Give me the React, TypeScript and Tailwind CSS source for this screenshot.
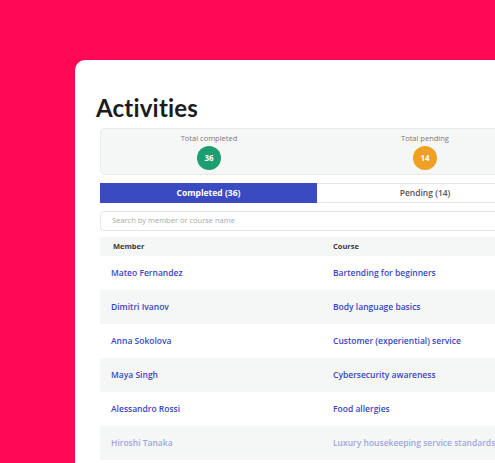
import React from "react";

const rows = [
  ["Mateo Fernandez", "Bartending for beginners"],
  ["Dimitri Ivanov", "Body language basics"],
  ["Anna Sokolova", "Customer (experiential) service"],
  ["Maya Singh", "Cybersecurity awareness"],
  ["Alessandro Rossi", "Food allergies"],
  ["Hiroshi Tanaka", "Luxury housekeeping service standards"],
];

export default function App() {
  return (
    <div
      className="w-[495px] h-[463px] overflow-hidden bg-[#ff0855] flex pl-[75px] pt-[60px]"
      style={{ fontFamily: "'Open Sans', Lato, sans-serif" }}
    >
      <div className="w-[484px] shrink-0 bg-white rounded-tl-[10px] pl-[25px] pt-[34px] flex flex-col">
        <h1
          className="text-[24px] leading-[28px] font-bold text-[#1b1b1b] -ml-[4px] tracking-[0.2px]"
          style={{ fontFamily: "Lato, sans-serif" }}
        >
          Activities
        </h1>
        <div className="w-[434px] flex flex-col">
          <div className="mt-[6px] h-[47px] rounded-[5px] border border-[#e9ebeb] bg-[#f5f6f6] grid grid-cols-2">
            <div className="flex flex-col items-center pt-[4px]">
              <span className="text-[7.5px] leading-[10px] text-[#7a7a7a]">Total completed</span>
              <span className="mt-[3px] w-[24px] h-[24px] rounded-full bg-[#1c9e70] text-white text-[8px] font-bold flex items-center justify-center">
                36
              </span>
            </div>
            <div className="flex flex-col items-center pt-[4px]">
              <span className="text-[7.5px] leading-[10px] text-[#7a7a7a]">Total pending</span>
              <span className="mt-[3px] w-[24px] h-[24px] rounded-full bg-[#f0a024] text-white text-[8px] font-bold flex items-center justify-center">
                14
              </span>
            </div>
          </div>
          <div className="mt-[8px] h-[20px] grid grid-cols-2">
            <div className="bg-[#3a4bc2] text-white text-[8.5px] font-bold flex items-center justify-center">
              Completed (36)
            </div>
            <div className="bg-white border border-l-0 border-[#e4e6e6] text-[#555] text-[8.5px] font-semibold flex items-center justify-center">
              Pending (14)
            </div>
          </div>
          <div className="mt-[8px] h-[20px] rounded-[4px] border border-[#e4e6e6] flex items-center pl-[11px] text-[7.5px] text-[#a5a8a8]">
            Search by member or course name
          </div>
          <div className="mt-[6px] h-[19px] bg-[#f5f6f6] flex items-center text-[7.5px] font-bold text-[#3a3a3a]">
            <div className="w-[220px] pl-[13px]">Member</div>
            <div className="pl-[13px]">Course</div>
          </div>
          {rows.map(([m, c], i) => (
            <div
              key={m}
              className={`h-[34px] flex items-center text-[8.5px] font-semibold ${
                i % 2 === 1 ? "bg-[#f5f6f6]" : "bg-white"
              } ${i === 5 ? "text-[#9fa6e0]" : "text-[#3647c2]"}`}
            >
              <div className="w-[220px] pl-[11px] whitespace-nowrap">{m}</div>
              <div className="pl-[13px] whitespace-nowrap">{c}</div>
            </div>
          ))}
        </div>
      </div>
    </div>
  );
}
